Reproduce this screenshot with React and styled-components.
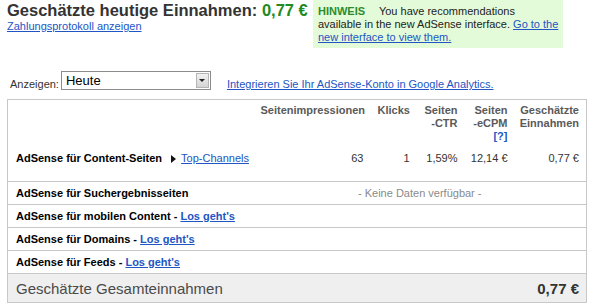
import styled, { createGlobalStyle } from "styled-components";

const GlobalStyle = createGlobalStyle`
    body {
        margin: 0;
        background: #fff;
        font-family: "Liberation Sans", Arial, sans-serif;
    }
`

const Page = styled.div`
    padding: 0 0 0 7px;
    width: 580px;
`
const Top = styled.div`
    display: flex;
    align-items: flex-start;
`
const TitleBlock = styled.div`
    flex: 0 0 306px;
    padding-top: 2px;
`
const Title = styled.h1`
    margin: 0;
    font-size: 16.5px;
    line-height: 16px;
    font-weight: bold;
    color: #333;
    white-space: nowrap;
`
const Amount = styled.span`color: #238a22;`

const TextLink = styled.a`
    color: #2255c4;
    text-decoration: underline;
    font-size: 11px;
    line-height: 13px;
    font-weight: ${p => (p.$bold ? "bold" : "normal")};
    cursor: pointer;
`
const SubLink = styled(TextLink)`
    display: block;
    margin-top: 2px;
`
const Hint = styled.div`
    width: 242px;
    padding: 5px 3px 4px 5px;
    background: #e4fbd9;
    font-size: 11px;
    line-height: 13px;
    color: #222;
`
const HintLabel = styled.span`
    color: #2d8b2d;
    font-weight: bold;
    margin-right: 11px;
`

// label and link sit on the select's bottom edge
const FilterRow = styled.div`
    display: flex;
    align-items: flex-end;
    margin-top: 23px;
    padding-left: 3px;
    height: 19px;
`
const Label = styled.span`
    font-size: 11px;
    line-height: 11px;
    color: #333;
`
const SelectBox = styled.div`
    display: flex;
    align-items: center;
    justify-content: space-between;
    box-sizing: border-box;
    width: 150px;
    height: 19px;
    margin-left: 2px;
    padding: 0 1px 0 4px;
    border: 1px solid #8c8c8c;
    font-size: 13px;
    color: #000;
`
const ArrowButton = styled.span`
    display: flex;
    align-items: center;
    justify-content: center;
    box-sizing: border-box;
    width: 13px;
    height: 15px;
    border: 1px solid #b5b5b5;
    background: linear-gradient(#f2f2f2, #d4d4d4);

    &::after {
        content: "";
        border-left: 3px solid transparent;
        border-right: 3px solid transparent;
        border-top: 3px solid #222;
    }
`
const AnalyticsLink = styled(TextLink)`
    margin-left: 16px;
    line-height: 11px;
`

const Table = styled.table`
    margin-top: 9px;
    width: 580px;
    border-collapse: collapse;
    table-layout: fixed;
    border: 1px solid #c8c8c8;
    font-size: 11px;
    line-height: 13px;
`
const Th = styled.th`
    vertical-align: top;
    text-align: right;
    white-space: nowrap;
    padding: 4px 7px 7px ${p => (p.$tight ? "3px" : "7px")};
    color: #5a5a5a;
    font-weight: bold;
`
const HelpLink = styled(TextLink)`
    font-weight: bold;
    text-decoration: none;
`
const Row = styled.tr`
    border-bottom: 1px solid #c8c8c8;
`
const NameCell = styled.td`
    padding: ${p => (p.$first ? "2px 8px 16px" : "5px 8px 4px")};
    font-weight: bold;
    color: #000;
    white-space: nowrap;
    vertical-align: top;
`
const NumCell = styled.td`
    padding: 2px 7px 16px 0;
    text-align: right;
    color: #333;
    white-space: nowrap;
    vertical-align: top;
`
const EmptyCell = styled.td`
    padding: 5px 0 4px;
    text-align: center;
    color: #8a8a8a;
`
const Arrow = styled.span`
    display: inline-block;
    margin: 0 5px 0 9px;
    border-top: 4px solid transparent;
    border-bottom: 4px solid transparent;
    border-left: 5px solid #111;
    vertical-align: -1px;
`
const TotalRow = styled.tr`
    background: #efefef;
    border-bottom: 1px solid #c8c8c8;
`
const TotalCell = styled.td`
    height: 28px;
    padding: 0 ${p => (p.$right ? "7px" : "8px")} 0 8px;
    font-size: 15px;
    color: ${p => (p.$right ? "#333" : "#4a4a4a")};
    font-weight: ${p => (p.$right ? "bold" : "normal")};
    text-align: ${p => (p.$right ? "right" : "left")};
    white-space: nowrap;
`

const products = [
    { name: "AdSense für Suchergebnisseiten", empty: true },
    { name: "AdSense für mobilen Content", link: true },
    { name: "AdSense für Domains", link: true },
    { name: "AdSense für Feeds", link: true },
];

function App() {
    return (
        <Page>
            <GlobalStyle />
            <Top>
                <TitleBlock>
                    <Title>Geschätzte heutige Einnahmen: <Amount>0,77 €</Amount></Title>
                    <SubLink>Zahlungsprotokoll anzeigen</SubLink>
                </TitleBlock>
                <Hint>
                    <HintLabel>HINWEIS</HintLabel> You have recommendations<br />
                    available in the new AdSense interface. <TextLink>Go to the<br />new interface to view them.</TextLink>
                </Hint>
            </Top>

            <FilterRow>
                <Label>Anzeigen:</Label>
                <SelectBox>
                    Heute
                    <ArrowButton />
                </SelectBox>
                <AnalyticsLink>Integrieren Sie Ihr AdSense-Konto in Google Analytics.</AnalyticsLink>
            </FilterRow>

            <Table>
                <colgroup>
                    <col style={{ width: 246 }} />
                    <col style={{ width: 117 }} />
                    <col style={{ width: 46 }} />
                    <col style={{ width: 48 }} />
                    <col style={{ width: 50 }} />
                    <col style={{ width: 72 }} />
                </colgroup>
                <thead>
                    <tr>
                        <Th />
                        <Th>Seitenimpressionen</Th>
                        <Th>Klicks</Th>
                        <Th>Seiten<br />-CTR</Th>
                        <Th>Seiten<br />-eCPM<br /><HelpLink>[?]</HelpLink></Th>
                        <Th $tight>Geschätzte<br />Einnahmen</Th>
                    </tr>
                </thead>
                <tbody>
                    <Row>
                        <NameCell $first>
                            AdSense für Content-Seiten<Arrow /><TextLink>Top-Channels</TextLink>
                        </NameCell>
                        <NumCell>63</NumCell>
                        <NumCell>1</NumCell>
                        <NumCell>1,59%</NumCell>
                        <NumCell>12,14 €</NumCell>
                        <NumCell>0,77 €</NumCell>
                    </Row>
                    {products.map(p => (
                        <Row key={p.name}>
                            <NameCell colSpan={p.empty ? 1 : 6}>
                                {p.name}
                                {p.link && <> - <TextLink $bold>Los geht's</TextLink></>}
                            </NameCell>
                            {p.empty && <EmptyCell colSpan={5}>- Keine Daten verfügbar -</EmptyCell>}
                        </Row>
                    ))}
                    <TotalRow>
                        <TotalCell colSpan={5}>Geschätzte Gesamteinnahmen</TotalCell>
                        <TotalCell $right>0,77 €</TotalCell>
                    </TotalRow>
                </tbody>
            </Table>
        </Page>
    );
}

export default App;
